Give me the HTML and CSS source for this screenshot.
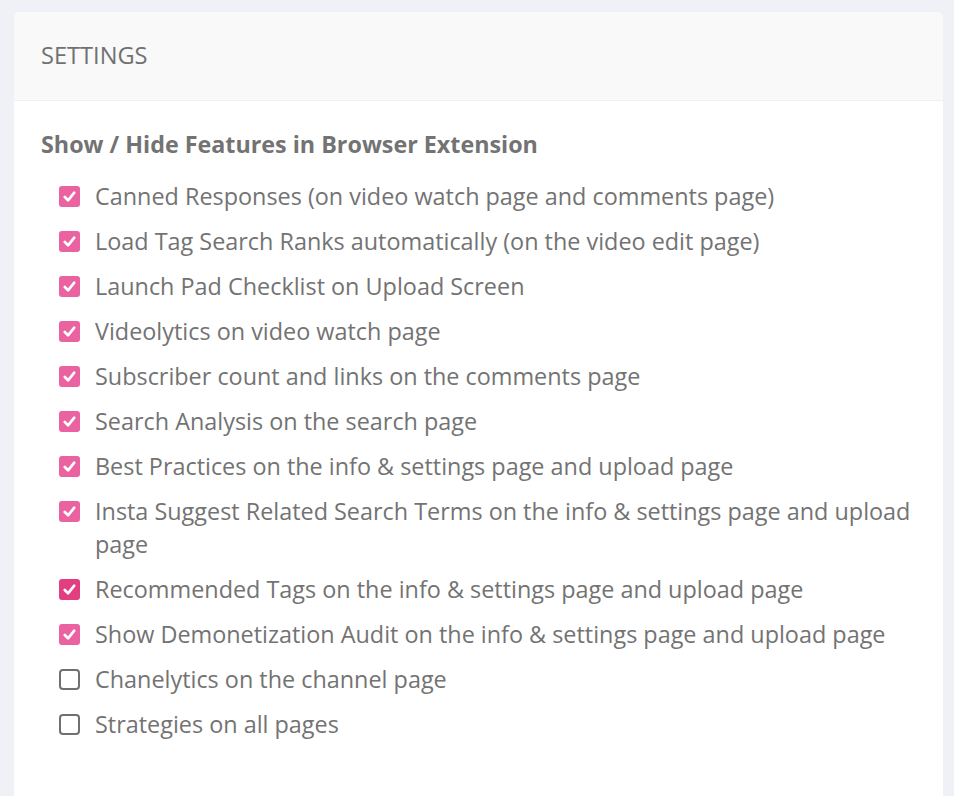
FILE: index.html
```html
<!DOCTYPE html>
<html>
<head>
<meta charset="utf-8">
<link rel="stylesheet" href="styles.css">
</head>
<body>
<div class="card">
  <div class="card-header">SETTINGS</div>
  <div class="card-body">
    <h3 class="section-title">Show / Hide Features in Browser Extension</h3>
    <ul class="options">
      <li class="option"><span class="box checked"><svg viewBox="0 0 20 20"><path d="M5 10.5l3.5 3.5 6.5-8"/></svg></span><span class="label">Canned Responses (on video watch page and comments page)</span></li>
      <li class="option"><span class="box checked"><svg viewBox="0 0 20 20"><path d="M5 10.5l3.5 3.5 6.5-8"/></svg></span><span class="label">Load Tag Search Ranks automatically (on the video edit page)</span></li>
      <li class="option"><span class="box checked"><svg viewBox="0 0 20 20"><path d="M5 10.5l3.5 3.5 6.5-8"/></svg></span><span class="label">Launch Pad Checklist on Upload Screen</span></li>
      <li class="option"><span class="box checked"><svg viewBox="0 0 20 20"><path d="M5 10.5l3.5 3.5 6.5-8"/></svg></span><span class="label">Videolytics on video watch page</span></li>
      <li class="option"><span class="box checked"><svg viewBox="0 0 20 20"><path d="M5 10.5l3.5 3.5 6.5-8"/></svg></span><span class="label">Subscriber count and links on the comments page</span></li>
      <li class="option"><span class="box checked"><svg viewBox="0 0 20 20"><path d="M5 10.5l3.5 3.5 6.5-8"/></svg></span><span class="label">Search Analysis on the search page</span></li>
      <li class="option"><span class="box checked"><svg viewBox="0 0 20 20"><path d="M5 10.5l3.5 3.5 6.5-8"/></svg></span><span class="label">Best Practices on the info &amp; settings page and upload page</span></li>
      <li class="option"><span class="box checked"><svg viewBox="0 0 20 20"><path d="M5 10.5l3.5 3.5 6.5-8"/></svg></span><span class="label">Insta Suggest Related Search Terms on the info &amp; settings page and upload page</span></li>
      <li class="option"><span class="box checked focus"><svg viewBox="0 0 20 20"><path d="M5 10.5l3.5 3.5 6.5-8"/></svg></span><span class="label">Recommended Tags on the info &amp; settings page and upload page</span></li>
      <li class="option"><span class="box checked"><svg viewBox="0 0 20 20"><path d="M5 10.5l3.5 3.5 6.5-8"/></svg></span><span class="label">Show Demonetization Audit on the info &amp; settings page and upload page</span></li>
      <li class="option"><span class="box"></span><span class="label">Chanelytics on the channel page</span></li>
      <li class="option"><span class="box"></span><span class="label">Strategies on all pages</span></li>
    </ul>
  </div>
</div>
</body>
</html>
```

FILE: styles.css
```css
html, body {
  margin: 0;
  padding: 0;
}
body {
  background: #f0f1f7;
  font-family: "Open Sans", "Noto Sans", sans-serif;
  color: #737373;
  padding: 12px 11px 0 14px;
}
.card {
  background: #fff;
  border-radius: 6px 6px 0 0;
  min-height: 784px;
}
.card-header {
  background: #f9f9f9;
  border-bottom: 1px solid #eef0f6;
  border-radius: 6px 6px 0 0;
  padding: 27px 27px 28px;
  font-size: 23.6px;
  line-height: 33px;
  color: #717171;
}
.card-body {
  padding: 27px 27px 40px;
}
.section-title {
  margin: 0 0 19px;
  font-size: 23.3px;
  line-height: 33px;
  font-weight: 700;
  color: #737373;
}
.options {
  list-style: none;
  margin: 0;
  padding: 0 0 0 18px;
}
.option {
  display: flex;
  align-items: flex-start;
  gap: 15px;
  font-size: 23.4px;
  line-height: 33px;
  margin-bottom: 12px;
}
.box {
  flex: none;
  width: 21px;
  height: 21px;
  box-sizing: border-box;
  border: 2px solid #707070;
  border-radius: 4px;
  margin-top: 6px;
  display: flex;
  align-items: center;
  justify-content: center;
}
.box.checked {
  border: none;
  background: #ea62a0;
  border-radius: 3px;
}
.box.checked.focus {
  background: #e23f80;
}
.box svg {
  width: 19px;
  height: 19px;
}
.box svg path {
  fill: none;
  stroke: #fff;
  stroke-width: 2.8;
  stroke-linecap: round;
  stroke-linejoin: round;
}
```
